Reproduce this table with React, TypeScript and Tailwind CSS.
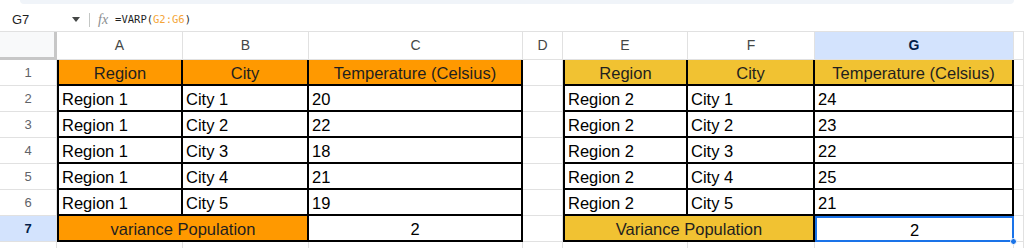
import type { ReactNode } from "react";

type Row = { region: string; city: string; temp: string };

const left: Row[] = [
  { region: "Region 1", city: "City 1", temp: "20" },
  { region: "Region 1", city: "City 2", temp: "22" },
  { region: "Region 1", city: "City 3", temp: "18" },
  { region: "Region 1", city: "City 4", temp: "21" },
  { region: "Region 1", city: "City 5", temp: "19" },
];

const right: Row[] = [
  { region: "Region 2", city: "City 1", temp: "24" },
  { region: "Region 2", city: "City 2", temp: "23" },
  { region: "Region 2", city: "City 3", temp: "22" },
  { region: "Region 2", city: "City 4", temp: "25" },
  { region: "Region 2", city: "City 5", temp: "21" },
];

const grid = "border-r border-b border-[#e1e1e1]";
const black = "border-r-2 border-b-2 border-black";

function RowHead({ n, active }: { n: number | string; active?: boolean }) {
  return (
    <div
      className={`flex h-[26px] items-center justify-center text-[13px] ${grid} ${
        active ? "bg-[#d3e3fd] font-bold text-[#041e49]" : "bg-white text-[#5f6368]"
      }`}
    >
      {n}
    </div>
  );
}

function Cell({
  children,
  className = "",
}: {
  children?: ReactNode;
  className?: string;
}) {
  return (
    <div className={`flex h-[26px] items-center overflow-hidden whitespace-nowrap pt-[2px] ${className}`}>
      {children}
    </div>
  );
}

function HeaderRow({ n, bgA, bgB }: { n: number; bgA: string; bgB: string }) {
  const head = `justify-center text-[16.5px] text-[#1f1f1f] ${black}`;
  return (
    <>
      <RowHead n={n} />
      <Cell className={`${head} ${bgA} border-l-2`}>Region</Cell>
      <Cell className={`${head} ${bgA}`}>City</Cell>
      <Cell className={`${head} ${bgA}`}>Temperature (Celsius)</Cell>
      <Cell className={grid} />
      <Cell className={`${head} ${bgB} border-l-2`}>Region</Cell>
      <Cell className={`${head} ${bgB}`}>City</Cell>
      <Cell className={`${head} ${bgB}`}>Temperature (Celsius)</Cell>
      <Cell className={grid} />
    </>
  );
}

function DataRow({ n, a, b }: { n: number; a: Row; b: Row }) {
  const data = `bg-white pl-[3px] text-[16.5px] text-black ${black}`;
  return (
    <>
      <RowHead n={n} />
      <Cell className={`${data} border-l-2`}>{a.region}</Cell>
      <Cell className={data}>{a.city}</Cell>
      <Cell className={data}>{a.temp}</Cell>
      <Cell className={grid} />
      <Cell className={`${data} border-l-2`}>{b.region}</Cell>
      <Cell className={data}>{b.city}</Cell>
      <Cell className={data}>{b.temp}</Cell>
      <Cell className={grid} />
    </>
  );
}

export default function App() {
  const cols = ["A", "B", "C", "D", "E", "F", "G"];
  return (
    <div
      className="h-[248px] w-[1024px] overflow-hidden bg-white"
      style={{ fontFamily: '"Liberation Sans", Arial, sans-serif' }}
    >
      {/* top strip */}
      <div className="h-[8px] bg-white">
        <div className="ml-[20px] mr-[10px] h-[4px] rounded-b-[6px] bg-[#f0f4f9]" />
      </div>

      {/* formula bar */}
      <div className="flex h-[24px] items-center border-b border-[#e1e1e1] text-[13px] text-[#1f1f1f]">
        <div className="w-[68px] pl-[12px]">G7</div>
        <svg width="8" height="5" viewBox="0 0 8 5" className="ml-[4px]">
          <path d="M0 0h8L4 5z" fill="#444746" />
        </svg>
        <div className="ml-[9px] h-[14px] w-px bg-[#c4c7c5]" />
        <span
          className="ml-[8px] text-[14px] italic text-[#8a8d90]"
          style={{ fontFamily: '"Liberation Serif", serif' }}
        >
          fx
        </span>
        <span
          className="ml-[7px] text-[10.5px] text-[#1f1f1f]"
          style={{ fontFamily: '"DejaVu Sans Mono", "Liberation Mono", monospace' }}
        >
          =VARP(<span className="text-[#f4a537]">G2:G6</span>)
        </span>
      </div>

      <div className="grid grid-cols-[57px_126px_126px_214px_40px_125px_127px_199px_10px]">
        {/* column headers */}
        <div className="h-[28px] border-r-[3px] border-b-[3px] border-[#c7c7c7] bg-[#f8f9fa]" />
        {cols.map((c) => (
          <div
            key={c}
            className={`flex h-[28px] items-center justify-center text-[14px] ${grid} ${
              c === "G" ? "bg-[#d3e3fd] font-bold text-[#041e49]" : "bg-white text-[#444746]"
            }`}
          >
            {c}
          </div>
        ))}
        <div className={`h-[28px] ${grid}`} />

        <HeaderRow n={1} bgA="bg-[#ff9900]" bgB="bg-[#f1c232]" />
        {left.map((r, i) => (
          <DataRow key={i} n={i + 2} a={r} b={right[i]} />
        ))}

        {/* row 7 */}
        <RowHead n={7} active />
        <Cell
          className={`col-span-2 justify-center border-l-2 bg-[#ff9900] text-[16.5px] text-[#1f1f1f] ${black}`}
        >
          variance Population
        </Cell>
        <Cell className={`justify-center bg-white text-[16.5px] text-black ${black}`}>2</Cell>
        <Cell className={grid} />
        <Cell
          className={`col-span-2 justify-center border-l-2 bg-[#f1c232] text-[16.5px] text-[#1f1f1f] ${black}`}
        >
          Variance Population
        </Cell>
        <div className="relative">
          <Cell className="justify-center border-2 border-[#1a73e8] bg-white text-[16.5px] text-black">
            2
          </Cell>
          <span className="absolute -bottom-[3px] -right-[3px] h-[7px] w-[7px] rounded-full border border-white bg-[#1a73e8]" />
        </div>
        <Cell className={grid} />

        {/* row 8 partial */}
        <div className={`h-[10px] ${grid}`} />
        {cols.map((c) => (
          <div key={c} className={`h-[10px] ${grid}`} />
        ))}
        <div className={`h-[10px] ${grid}`} />
      </div>
    </div>
  );
}
